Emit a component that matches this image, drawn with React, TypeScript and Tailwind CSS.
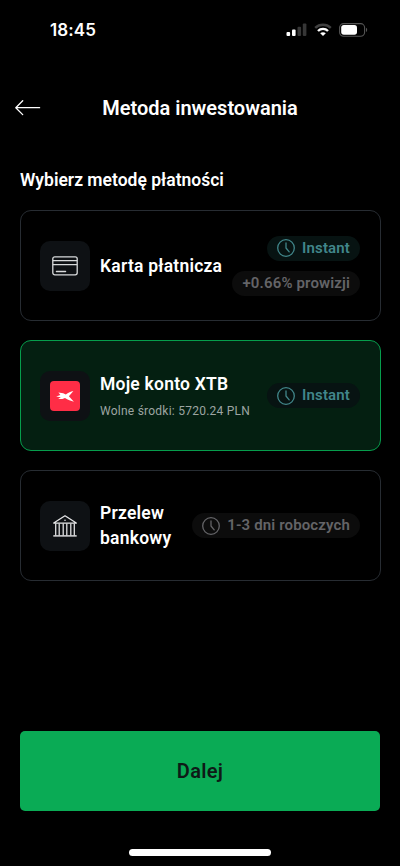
import type { ReactNode } from 'react';

type Tone = 'teal' | 'gray';

interface Badge {
  label: string;
  tone: Tone;
  clock?: boolean;
}

interface PaymentMethod {
  id: string;
  title: string;
  subtitle?: string;
  icon: ReactNode;
  badges: Badge[];
  selected?: boolean;
}

const toneClass: Record<Tone, string> = {
  teal: 'bg-[#071312] text-[#41868a]',
  gray: 'bg-[#0c0c0c] text-[#646467]',
};

function CardIcon() {
  return (
    <svg width="26" height="20" viewBox="0 0 26 20" fill="none" stroke="#d8dadb" strokeWidth="1.3" aria-hidden="true">
      <rect x="0.8" y="0.8" width="24.4" height="18" rx="2" />
      <path d="M0.8 4.7h24.4M0.8 8.7h24.4" />
      <path d="M4.4 15.5h9.2" strokeLinecap="round" />
    </svg>
  );
}

function XtbIcon() {
  return (
    <svg width="30" height="30" viewBox="0 0 30 30" aria-hidden="true">
      <rect width="30" height="30" rx="4" fill="#ff2d46" />
      <path
        d="M6.2 15.5L10.4 14L8.4 11.6L13.2 12.3L15.8 13.4C18.2 11.6 20.8 10.3 23.4 9.9L18.9 15.2L23.9 20.7C21 20.2 17.6 19 15 17.1L12.4 17.9L8.2 18.1L10.8 16.3Z"
        fill="#fff"
      />
    </svg>
  );
}

function BankIcon() {
  return (
    <svg width="24" height="22" viewBox="0 0 24 22" fill="none" stroke="#e6e7e8" strokeWidth="1.25" aria-hidden="true">
      <path d="M0.7 8.1L12 0.8l11.3 7.3z" strokeLinejoin="round" />
      <path d="M0.3 20.9h23.4" strokeWidth="1.4" />
      <path d="M2.7 8.5v12M6.2 8.5v12M10.2 8.5v12M13.8 8.5v12M17.8 8.5v12M21.3 8.5v12" />
      <circle cx="12" cy="5.2" r="0.8" fill="#e6e7e8" stroke="none" />
    </svg>
  );
}

function ClockIcon() {
  return (
    <svg width="18" height="18" viewBox="0 0 18 18" fill="none" stroke="currentColor" strokeWidth="1.3" aria-hidden="true">
      <circle cx="9" cy="9" r="8.3" />
      <path d="M9 4v5l3.2 3.8" strokeLinecap="round" strokeLinejoin="round" />
    </svg>
  );
}

const methods: PaymentMethod[] = [
  {
    id: 'card',
    title: 'Karta płatnicza',
    icon: <CardIcon />,
    badges: [
      { label: 'Instant', tone: 'teal', clock: true },
      { label: '+0.66% prowizji', tone: 'gray' },
    ],
  },
  {
    id: 'xtb',
    title: 'Moje konto XTB',
    subtitle: 'Wolne środki: 5720.24 PLN',
    icon: <XtbIcon />,
    badges: [{ label: 'Instant', tone: 'teal', clock: true }],
    selected: true,
  },
  {
    id: 'transfer',
    title: 'Przelew bankowy',
    icon: <BankIcon />,
    badges: [{ label: '1-3 dni roboczych', tone: 'gray', clock: true }],
  },
];

function StatusBar() {
  return (
    <div className="flex h-[60px] items-center justify-between pl-[50px] pr-[32px]">
      <span className="font-['Inter'] text-[17px] font-semibold leading-none tracking-[0.1px]">18:45</span>
      <div className="flex items-center gap-[7px]">
        <svg width="21" height="14" viewBox="0 0 21 14" aria-hidden="true">
          <rect x="0.5" y="9" width="3.6" height="4" rx="1" fill="#fff" />
          <rect x="6" y="6.6" width="3.6" height="6.4" rx="1" fill="#fff" />
          <rect x="11.5" y="3.8" width="3.6" height="9.2" rx="1" fill="#363636" />
          <rect x="16.8" y="0.5" width="3.6" height="12.5" rx="1" fill="#363636" />
        </svg>
        <svg width="18" height="14" viewBox="0 0 18 14" fill="none" aria-hidden="true">
          <path d="M1.2 4.9C5.6 0.7 12.4 0.7 16.8 4.9" stroke="#404040" strokeWidth="2.4" />
          <path d="M4 8C6.8 5.2 11.2 5.2 14 8" stroke="#fff" strokeWidth="2.4" />
          <path d="M9 13L6.2 10.3C7.7 8.9 10.3 8.9 11.8 10.3Z" fill="#fff" />
        </svg>
        <svg width="29" height="14" viewBox="0 0 29 14" aria-hidden="true">
          <rect x="0.6" y="0.6" width="25" height="12.6" rx="4" fill="none" stroke="#555" strokeWidth="1.1" />
          <rect x="2.2" y="2.1" width="15.8" height="9.6" rx="2.6" fill="#fff" />
          <path d="M27 4.8c1.6.6 1.6 3.6 0 4.2z" fill="#555" />
        </svg>
      </div>
    </div>
  );
}

function BadgePill({ badge }: { badge: Badge }) {
  return (
    <span
      className={`flex h-[25px] items-center gap-[7px] whitespace-nowrap rounded-full px-[10px] text-[15px] font-semibold tracking-[0.14px] ${toneClass[badge.tone]}`}
    >
      {badge.clock && <ClockIcon />}
      {badge.label}
    </span>
  );
}

function MethodCard({ method }: { method: PaymentMethod }) {
  return (
    <button
      type="button"
      className={`flex h-[111px] w-full items-center rounded-[11px] border px-[19.5px] text-left ${
        method.selected ? 'border-[#069d4c] bg-[#041f11]' : 'border-[#272c32] bg-black'
      }`}
    >
      <span className="flex size-[50px] shrink-0 items-center justify-center rounded-[10px] bg-[#0e1114]">
        {method.icon}
      </span>
      <span className="ml-[10px] flex min-w-0 flex-1 flex-col pt-px">
        <span className="text-[17.5px] font-semibold leading-[25px] tracking-[0.22px]">{method.title}</span>
        {method.subtitle && (
          <span className="-mb-[2px] mt-[3px] whitespace-nowrap text-[12px] leading-[22px] tracking-[0.24px] text-[#9da5a2]">
            {method.subtitle}
          </span>
        )}
      </span>
      <span className="flex shrink-0 flex-col items-end gap-[10px]">
        {method.badges.map((badge) => (
          <BadgePill key={badge.label} badge={badge} />
        ))}
      </span>
    </button>
  );
}

export default function App() {
  return (
    <div className="flex h-[866px] w-[400px] flex-col overflow-hidden bg-black font-['Roboto',sans-serif] text-white">
      <StatusBar />

      <header className="mt-[28px] grid h-10 grid-cols-[60px_1fr_60px] items-center">
        <button type="button" aria-label="Wstecz" className="pl-[15px]">
          <svg width="26" height="16" viewBox="0 0 26 16" fill="none" stroke="#fff" strokeWidth="1.3" strokeLinecap="round" strokeLinejoin="round">
            <path d="M24.6 7.7H0.8M7.7 0.8L0.8 7.7l6.9 6.9" />
          </svg>
        </button>
        <h1 className="whitespace-nowrap text-center text-[20px] font-semibold">Metoda inwestowania</h1>
      </header>

      <main className="mt-[40px] px-[19.5px]">
        <h2 className="pl-[0.5px] text-[17.5px] font-semibold leading-[25px]">Wybierz metodę płatności</h2>
        <div className="mt-[17px] flex flex-col gap-[19px]">
          {methods.map((method) => (
            <MethodCard key={method.id} method={method} />
          ))}
        </div>
      </main>

      <footer className="mt-auto flex flex-col items-center px-5 pb-[10px]">
        <button
          type="button"
          className="h-20 w-full rounded-[5px] bg-[#0aab55] text-[20px] font-semibold tracking-[0.3px] text-[#0e1a17]"
        >
          Dalej
        </button>
        <div className="mt-[38px] h-[7px] w-[142px] rounded-full bg-white" />
      </footer>
    </div>
  );
}
